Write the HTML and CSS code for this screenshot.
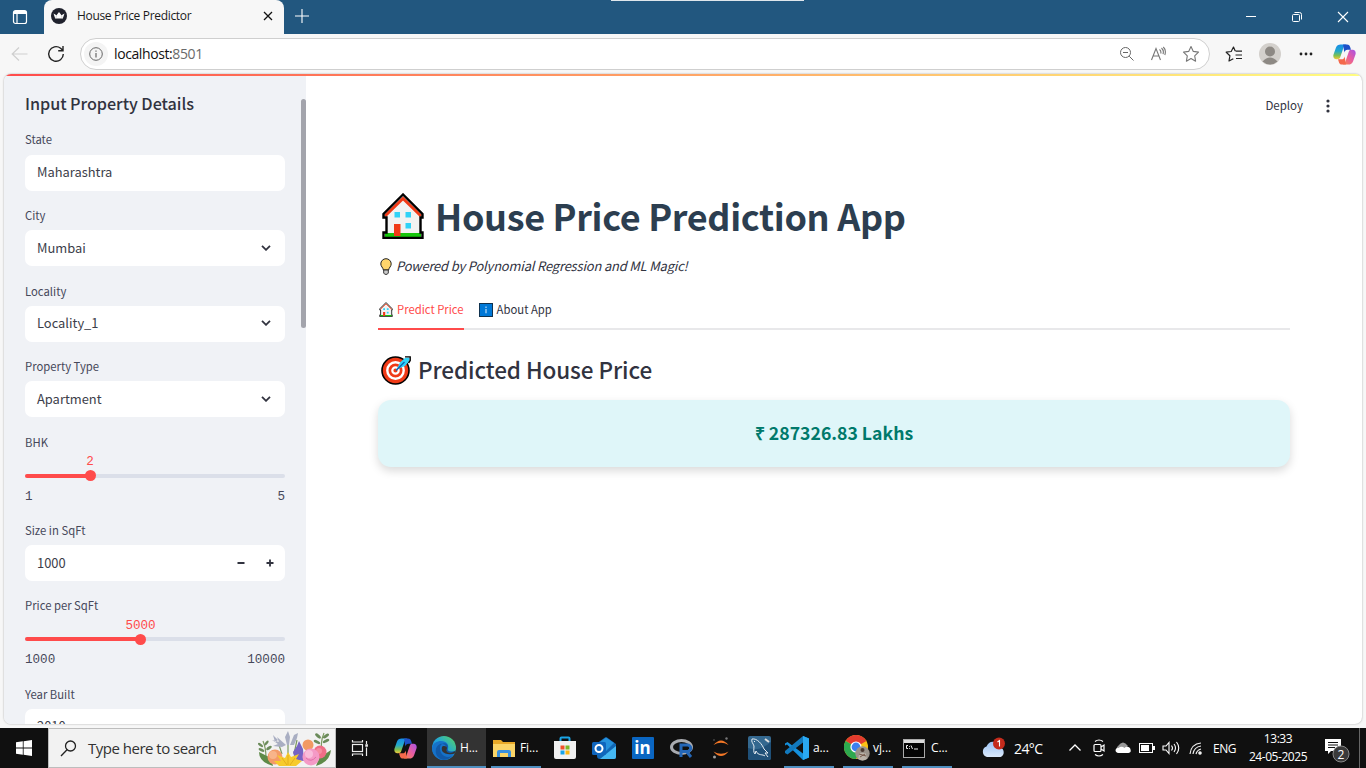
FILE: index.html
```html
<!DOCTYPE html>
<html lang="en">
<head>
<meta charset="utf-8">
<title>House Price Predictor</title>
<link rel="stylesheet" href="styles.css">
</head>
<body>
<svg class="defs" aria-hidden="true">
  <defs>
    <symbol id="house" viewBox="0 0 42 46">
      <path d="M21 3L2 22v4h3v18h-3v1h38v-26L21 3z" fill="#f2f2f2"/>
      <path d="M3 40h36v4H3z" fill="#16c60c"/>
      <path d="M12 31h6.500v12H12z" fill="#f03a17"/>
      <path d="M12.500 19h5.500v5.500h-5.500zM23.500 19H29v5.500h-5.500zM23.500 30H29v5.500h-5.500z" fill="#31d2f7"/>
      <path d="M3 23L21 5.500 39 23" fill="none" stroke="#f03a17" stroke-width="3"/>
      <path d="M21 1.500L1.500 21v3.500h3v15h-3V45h39v-5.500h-2v-15h2V21L21 1.500z" fill="none" stroke="#000" stroke-width="2.400"/>
    </symbol>
    <symbol id="copilot" viewBox="0 0 24 22">
      <path d="M8 .5h6c-2.500 1-3 3-3.800 5.500L7.500 14c-.6 1.700-1.500 2-3 2H3.500C.8 16-.2 13.500.5 11L3 4C3.900 1.500 5.500.5 8 .5z" fill="url(#cpa)"/>
      <path d="M10.500.5h4c2.300 0 3 1.200 3.500 3l.8 2.500h-3.600c-2 0-2.800 1-3.400 3z" fill="#1d50c8"/>
      <path d="M16 21.500h-6c2.500-1 3-3 3.800-5.500L16.500 8c.6-1.700 1.500-2 3-2h1c2.700 0 3.700 2.500 3 5L21 18c-.9 2.500-2.500 3.500-5 3.500z" fill="url(#cpb)"/>
      <path d="M13.500 21.500h-4c-2.300 0-3-1.200-3.500-3L5.200 16h3.600c2 0 2.800-1 3.400-3z" fill="#f4694c"/>
    </symbol>
    <linearGradient id="cpa" x1="0" y1="0" x2="0" y2="1"><stop offset="0" stop-color="#178be8"/><stop offset=".45" stop-color="#23aacb"/><stop offset=".75" stop-color="#7fc04f"/><stop offset="1" stop-color="#f5c73c"/></linearGradient>
    <linearGradient id="cpb" x1="1" y1="0" x2="0" y2="1"><stop offset="0" stop-color="#a653e8"/><stop offset=".5" stop-color="#e85d9f"/><stop offset="1" stop-color="#fb8a45"/></linearGradient>
    <linearGradient id="edgeg" x1="0" y1="1" x2="1" y2="0"><stop offset="0" stop-color="#1470c8"/><stop offset=".5" stop-color="#1fa3dc"/><stop offset="1" stop-color="#5bd95a"/></linearGradient>
    <linearGradient id="cloudg" x1="0" y1="0" x2="0" y2="1"><stop offset="0" stop-color="#9cc3f4"/><stop offset="1" stop-color="#dbe9fb"/></linearGradient>
  </defs>
</svg>

<header class="titlebar">
  <div class="workspaces"><svg width="16" height="16" viewBox="0 0 16 16" fill="none" stroke="#fff" stroke-width="1.200"><rect x="1.500" y="1.500" width="13" height="13" rx="2"/><path d="M5 5v9.500M2 4.500h12.500" /><path d="M2 3h12" stroke-width="2"/></svg></div>
  <div class="tab">
    <svg width="16" height="16" viewBox="0 0 16 16"><circle cx="8" cy="8" r="8" fill="#20222d"/><path d="M2.500 5.500l3 1.700L8 4l2.500 3.200 3-1.700-1.700 5H4.200z" fill="#fff"/><path d="M5.500 7.200L4.800 10.500M10.500 7.200l.7 3.300" stroke="#aaa" stroke-width=".5"/></svg>
    <span class="tab-title">House Price Predictor</span>
    <svg class="tab-close" width="10" height="10" viewBox="0 0 10 10"><path d="M1 1l8 8M9 1L1 9" stroke="#111" stroke-width="1.300"/></svg>
  </div>
  <svg class="newtab" width="14" height="14" viewBox="0 0 14 14"><path d="M7 0v14M0 7h14" stroke="#fff" stroke-width="1.100"/></svg>
  <div class="drag-hint"></div>
  <div class="wincontrols">
    <svg width="46" height="34"><path d="M18 16.500h10" stroke="#fff"/></svg>
    <svg width="46" height="34" fill="none" stroke="#fff"><rect x="18.500" y="14.500" width="7" height="7" rx="1"/><path d="M20.500 12.500h5a2 2 0 0 1 2 2v5"/></svg>
    <svg width="46" height="34"><path d="M18 12l10 10M28 12L18 22" stroke="#fff" stroke-width="1.100"/></svg>
  </div>
</header>

<div class="toolbar">
  <svg class="back" width="18" height="16" viewBox="0 0 18 16" fill="none" stroke="#cfcfcf" stroke-width="1.200"><path d="M8 1.500L1.200 8 8 14.500M1.200 8H16.500"/></svg>
  <svg class="reload" width="18" height="18" viewBox="0 0 18 18" fill="none" stroke="#222" stroke-width="1.400"><path d="M16.300 9a7.300 7.300 0 1 1-2.700-5.700L16 5.500M16 1v4.800h-4.800"/></svg>
  <div class="address">
    <span class="info"><svg width="14" height="14" viewBox="0 0 14 14" fill="none" stroke="#666"><circle cx="7" cy="7" r="6.300"/><path d="M7 6v4.500M7 3.500v1.300" stroke-width="1.200"/></svg></span>
    <span class="url">localhost:<span class="port">8501</span></span>
    <div class="address-icons">
      <svg width="16" height="16" viewBox="0 0 16 16" fill="none" stroke="#666"><circle cx="6.500" cy="6.500" r="5"/><path d="M10.200 10.200l4.300 4.300M4 6.500h5"/></svg>
      <svg width="17" height="16" viewBox="0 0 17 16" fill="none" stroke="#777"><path d="M1.500 14L6 2.500 10.500 14M3 10h6M9.500 3.500q2 1.500 1.200 4M11.500 2q2.700 2.500 1.500 6.200M13.300 1q3.200 3 1.500 8" stroke-width="1.100"/></svg>
      <svg width="18" height="18" viewBox="0 0 18 18" fill="none" stroke="#777" stroke-width="1.100"><path d="M9 1.500l2.300 4.900 5.200.7-3.800 3.700.9 5.400L9 13.600l-4.600 2.600.9-5.400L1.500 7.100l5.200-.7z" stroke-linejoin="round"/></svg>
    </div>
  </div>
  <svg class="favs" width="18" height="18" viewBox="0 0 18 18" fill="none" stroke="#222" stroke-width="1.200"><path d="M10.200 6L8.500 2 6.200 6.500l-5 .7 3.700 3.600-.9 5.200 4.300-2.300M10.500 6.200H17M10.500 10H17M11 13.500h6" stroke-linejoin="round"/></svg>
  <svg class="profile" width="22" height="22" viewBox="0 0 22 22"><circle cx="11" cy="11" r="11" fill="#d3d0cc"/><circle cx="11" cy="8.500" r="5" fill="#8d8984"/><path d="M3.500 18.500q7.500-8 15 0A11 11 0 0 1 3.500 18.500z" fill="#8d8984"/></svg>
  <svg class="more" width="14" height="4" viewBox="0 0 14 4" fill="#222"><circle cx="2" cy="2" r="1.400"/><circle cx="7" cy="2" r="1.400"/><circle cx="12" cy="2" r="1.400"/></svg>
  <svg class="cp" width="23" height="21"><use href="#copilot"/></svg>
</div>

<div class="viewport">
  <div class="decoration"></div>
  <div class="app">
    <aside class="sidebar">
      <h3>Input Property Details</h3>
      <div class="field"><label>State</label><div class="input">Maharashtra</div></div>
      <div class="field"><label>City</label><div class="input">Mumbai<svg class="chev" width="10" height="6" viewBox="0 0 10 6"><path d="M1 .8l4 4 4-4" fill="none" stroke="#31333f" stroke-width="1.800"/></svg></div></div>
      <div class="field"><label>Locality</label><div class="input">Locality_1<svg class="chev" width="10" height="6" viewBox="0 0 10 6"><path d="M1 .8l4 4 4-4" fill="none" stroke="#31333f" stroke-width="1.800"/></svg></div></div>
      <div class="field"><label>Property Type</label><div class="input">Apartment<svg class="chev" width="10" height="6" viewBox="0 0 10 6"><path d="M1 .8l4 4 4-4" fill="none" stroke="#31333f" stroke-width="1.800"/></svg></div></div>
      <div class="field slider"><label>BHK</label>
        <div class="track" style="--p:25%"><div class="fill"></div><div class="thumb"><span>2</span></div></div>
        <div class="ticks"><span>1</span><span>5</span></div>
      </div>
      <div class="field"><label>Size in SqFt</label><div class="input">1000<span class="steps"><svg width="8" height="8" viewBox="0 0 8 8"><path d="M.5 4h7" stroke="#31333f" stroke-width="1.800"/></svg><svg width="8" height="8" viewBox="0 0 8 8"><path d="M.5 4h7M4 .5v7" stroke="#31333f" stroke-width="1.800"/></svg></span></div></div>
      <div class="field slider"><label>Price per SqFt</label>
        <div class="track" style="--p:44.44%"><div class="fill"></div><div class="thumb"><span>5000</span></div></div>
        <div class="ticks"><span>1000</span><span>10000</span></div>
      </div>
      <div class="field"><label>Year Built</label><div class="input">2010</div></div>
      <div class="scrollbar"></div>
    </aside>

    <main class="main">
      <div class="appbar"><span>Deploy</span><svg width="4" height="14" viewBox="0 0 4 14" fill="#31333f"><circle cx="2" cy="2" r="1.600"/><circle cx="2" cy="7" r="1.600"/><circle cx="2" cy="12" r="1.600"/></svg></div>
      <div class="content">
        <h1><svg width="42" height="46"><use href="#house"/></svg><span>House Price Prediction App</span></h1>
        <p class="tagline"><svg width="12" height="17" viewBox="0 0 12 17"><path d="M6 .7a5.200 5.200 0 0 0-5.200 5.200C.8 8.500 3 9.500 3.400 12h5.200c.4-2.500 2.600-3.500 2.600-6.100A5.200 5.200 0 0 0 6 .7z" fill="#ffd56b" stroke="#222"/><path d="M3.700 12h4.600v3L7.200 16.300H4.800L3.700 15z" fill="#ccc" stroke="#222" stroke-width=".9"/></svg><span>Powered by Polynomial Regression and ML Magic!</span></p>
        <div class="tabs">
          <div class="tabitem active"><svg width="14" height="15" viewBox="0 0 42 46"><use href="#house"/></svg><span>Predict Price</span></div>
          <div class="tabitem"><svg width="14" height="14" viewBox="0 0 14 14"><rect x=".5" y=".5" width="13" height="13" fill="#0078d7" stroke="#10324f"/><path d="M7 6v4.300M7 3.600v1.300" stroke="#cfe7fa" stroke-width="1.100" fill="none"/></svg><span>About App</span></div>
        </div>
        <h2><svg width="30" height="29" viewBox="0 0 30 29"><circle cx="14.500" cy="14.500" r="13.500" fill="#f03a17" stroke="#000" stroke-width="1.600"/><circle cx="14.500" cy="14.500" r="8.200" fill="none" stroke="#fff" stroke-width="2.400"/><circle cx="14.500" cy="14.500" r="3.200" fill="none" stroke="#fff" stroke-width="2.200"/><path d="M15 14.500l4-8L24 2l4.500-.5v3L24 10l-5 2z" fill="#31d2f7"/><path d="M24 .9h5.200v3.600L27.500 7" fill="none" stroke="#000" stroke-width="1.400"/><path d="M15 14.500l8.500-8.500" fill="none" stroke="#0a68b8" stroke-width="1.500"/></svg><span>Predicted House Price</span></h2>
        <div class="result"><span>₹ 287326.83 Lakhs</span></div>
      </div>
    </main>
  </div>
</div>

<footer class="taskbar">
  <div class="tb w48"><svg width="16" height="16" viewBox="0 0 16 16" fill="#fff"><path d="M0 2.300L6.800 1.300v6.300H0zM7.600 1.200L16 0v7.600H7.600zM0 8.400h6.800v6.300L0 13.700zM7.600 8.400H16V16l-8.400-1.200z"/></svg></div>
  <div class="search">
    <svg width="17" height="17" viewBox="0 0 17 17" fill="none" stroke="#222" stroke-width="1.300"><circle cx="10.500" cy="6" r="5"/><path d="M7 9.700L1 16"/></svg>
    <span>Type here to search</span>
    <svg class="flowers" width="74" height="37" viewBox="0 0 74 37">
      <path d="M8 28Q8 18 5 11M64 24Q62 12 66 3M30 30V12M24 24l-4-12M36 24l3-14" stroke="#7c9a60" stroke-width="1.200" fill="none"/>
      <g fill="#6b8b5a"><ellipse cx="2.500" cy="15" rx="3" ry="1.300" transform="rotate(35 2.500 15)"/><ellipse cx="8.500" cy="13" rx="3" ry="1.300" transform="rotate(-50 8.500 13)"/><ellipse cx="3.500" cy="20" rx="3.200" ry="1.400" transform="rotate(25 3.500 20)"/><ellipse cx="11" cy="18" rx="3.200" ry="1.400" transform="rotate(-35 11 18)"/><ellipse cx="60" cy="6" rx="3.500" ry="1.500" transform="rotate(40 60 6)"/><ellipse cx="68" cy="6" rx="3.500" ry="1.500" transform="rotate(-35 68 6)"/><ellipse cx="59" cy="12" rx="3.500" ry="1.500" transform="rotate(25 59 12)"/><ellipse cx="68" cy="11" rx="3.500" ry="1.500" transform="rotate(-25 68 11)"/></g>
      <path d="M1 22q0 10 14 14l-2-8zM73 20q-1 12-15 16l3-8z" fill="#5e8a48"/>
      <path d="M29 15l-2-8 3-6 2 6-1 8zM28 15l-9-8 2 5-7-2 6 4-5 2 9 1zM32 15l4-10 4-2-1 5-3 7zM17 12l-2-7 5 5z" fill="#a9aec2"/>
      <circle cx="17" cy="27" r="7.500" fill="#f39a68"/><circle cx="15" cy="25" r="4" fill="#f8b48a"/><circle cx="50" cy="15" r="5.500" fill="#f29a63"/><circle cx="62" cy="22" r="6.500" fill="#ef6d86"/><circle cx="61" cy="21" r="3" fill="#f58ca0"/>
      <path d="M37 30l-2-8 4-6 2-5 4 8 1 12z" fill="#7663c4"/>
      <circle cx="53" cy="27" r="8.500" fill="#f49ac6"/><circle cx="51" cy="24" r="4" fill="#f9bddb"/><path d="M48 28q5 5 10-1" stroke="#e070a8" fill="none"/>
      <path d="M30 22l3 5 8-3-3 5 6 2-6 5H21l-5-5 7 0-4-6 8 3z" fill="#f7cb2d"/><path d="M30 25v10M24 28l5 7M37 28l-5 7" stroke="#e4ad1c"/>
    </svg>
  </div>
  <div class="tb w48"><svg width="18" height="16" viewBox="0 0 18 16" fill="none" stroke="#eee" stroke-width="1.200"><rect x="1.500" y="4.500" width="10" height="7"/><path d="M1.500 0v2h10V0M1.500 16v-2h10v2M15.500 1v3M15.500 7.500V16"/><path d="M14.300 5.500h2.600" stroke-width="2.500"/></svg></div>
  <div class="tb w43"><svg width="23" height="21"><use href="#copilot"/></svg></div>
  <div class="tb run edge"><svg width="24" height="24" viewBox="0 0 24 24"><circle cx="12" cy="12" r="12" fill="url(#edgeg)"/><path d="M0 12C1 7 5 5 9 5c6 0 8 4 7 8-.5 2 2 3 4 3 1.500 0 2.500-.5 3.500-1.500-1 5-6 9.500-12 9.500C5 24 0 18 0 12z" fill="#1672c9"/><path d="M8 12c0 7 6 11 12 8-3 4-9 5-13 2-5-4-4-12 1-14 5-1 7 3 6 5-1 2 1 5 5 4 2 0 4-1 4.500-2.500-1.500 1-7 2-8-.5-.5-2 1-3 0-5-1.500-3-7.500-2-7.500 3z" fill="#1159a8"/><path d="M10 11c1-2 5-1 5 1 0 1-1 2-.5 3 1 2.500 6 2.800 9.300-.8l-.8 3.200C18 19 12 18 10.500 15.500 9.800 14 9.500 12.500 10 11z" fill="#333"/></svg><span>H...</span></div>
  <div class="tb run files"><svg width="22" height="19" viewBox="0 0 22 19"><path d="M0 1h8l2 2h12v15H0z" fill="#e8a928"/><path d="M0 5h22v13H0z" fill="#fbd567"/><path d="M4 18v-5q0-2 2-2h10q2 0 2 2v5h-3v-4H7v4z" fill="#3b90dc"/></svg><span>Fi...</span></div>
  <div class="tb w39 first"><svg width="24" height="24" viewBox="0 0 24 24"><path d="M7.500 6V2.500q0-1 1-1h7q1 0 1 1V6" fill="none" stroke="#1aa5e6" stroke-width="2"/><path d="M1 5h22v16q0 2-2 2H3q-2 0-2-2z" fill="#f1f1f1"/><path d="M7.500 9.500h4v4h-4z" fill="#f0512a"/><path d="M12.500 9.500h4v4h-4z" fill="#7eb927"/><path d="M7.500 14.500h4v4h-4z" fill="#18a3e8"/><path d="M12.500 14.500h4v4h-4z" fill="#fbb613"/></svg></div>
  <div class="tb w39"><svg width="24" height="24" viewBox="0 0 24 24"><path d="M4 8L13 1.500q1-.7 2 0L24 8v13q0 2-2 2H8q-3 0-3-3z" fill="#1066b5"/><path d="M8 6l6-4.500L22 7l-8 8z" fill="#2591dc"/><path d="M24 10v11q0 2-2 2H8z" fill="#45b8f3"/><rect y="6" width="14" height="13" rx="1.500" fill="#0f65bd"/><circle cx="7" cy="12.500" r="3.500" fill="none" stroke="#fff" stroke-width="2"/></svg></div>
  <div class="tb w39"><span class="linkedin">in</span></div>
  <div class="tb w39"><svg width="24" height="19" viewBox="0 0 24 19"><ellipse cx="11.500" cy="8" rx="10" ry="6.500" fill="none" stroke="#a9abb0" stroke-width="3"/><path d="M11 18V6h6.500a3 3 0 0 1 0 6.500H11M16.500 12.500L21 18" stroke="#2467b8" stroke-width="3" fill="none"/></svg></div>
  <div class="tb w39"><svg width="18" height="22" viewBox="0 0 18 22"><path d="M1.500 8Q9-1 16.500 8 9 3.500 1.500 8zM1.500 14.500q7.500 9 15 0-7.500 4.500-15 0z" fill="#f37726"/><circle cx="14.500" cy="1.500" r="1.200" fill="#767677"/><circle cx="2.500" cy="20" r="1.500" fill="#9e9e9e"/><circle cx="2" cy="3" r=".7" fill="#777"/></svg></div>
  <div class="tb w39"><svg width="23" height="24" viewBox="0 0 23 24"><rect width="23" height="24" rx="2" fill="#34688f"/><path d="M0 12Q12 16 23 6v16q0 2-2 2H2q-2 0-2-2z" fill="#1f5078"/><path d="M4 3c5-1 10 5 12 10l4 4-3 0 3 4M4 3c-1 3 1 4 2 7 0 3-1 6 1 8l1-3c2 5 7 3 9 5M6 5l1 1" fill="none" stroke="#e6edf3"/><path d="M17 3l4 3" stroke="#ddd" stroke-width="2"/></svg></div>
  <div class="tb run code"><svg width="24" height="24" viewBox="0 0 24 24"><path d="M18 0l6 2.500v19L18 24 2 8.500 0 9.500v-2L2.500 6 18 17.500z" fill="#1590dc"/><path d="M18 0L0 15v2l2.500 1.500L18 6.500z" fill="#1279bd"/><path d="M18 0l6 2.500v19L18 24z" fill="#2aa9f3"/></svg><span>a...</span></div>
  <div class="tb run chrome"><svg width="26" height="26" viewBox="0 0 26 26"><circle cx="12" cy="12" r="12" fill="#fbc116"/><path d="M12 12L1.600 6A12 12 0 0 1 22.400 6z" fill="#e33b2e"/><path d="M1.600 6A12 12 0 0 0 12 24l5-9-5-3z" fill="#2da94f"/><circle cx="12" cy="12" r="5.600" fill="#fff"/><circle cx="12" cy="12" r="4.400" fill="#3c80ee"/><circle cx="18.500" cy="18.500" r="7.200" fill="#9a938a"/><circle cx="18.500" cy="15" r="2" fill="#4b3a32"/><path d="M14 24l1.500-6h6l1.500 6q-4.500 2.500-9 0z" fill="#b9b2a8"/><path d="M15 19l7 2M16 22l5-3" stroke="#765b4c"/></svg><span>vj...</span></div>
  <div class="tb run cmd"><svg width="22" height="19" viewBox="0 0 22 19"><rect x=".5" y=".5" width="21" height="18" fill="#050505" stroke="#aaa"/><path d="M1 1h20v3H1z" fill="#ddd"/><path d="M5 6.500H3.500v3H5M6.500 7v.8M6.500 9v.8M8 6.500l1.500 3.500M11 10h4" stroke="#eee" fill="none"/></svg><span>C...</span></div>
  <div class="tray">
    <div class="weather"><svg width="25" height="22" viewBox="0 0 25 22"><path d="M6 20a5.500 5.500 0 0 1-.5-10.500Q8 3.500 14 5q4 1 5 5.500A5 5 0 0 1 19.500 20z" fill="url(#cloudg)"/><circle cx="18" cy="6.500" r="6" fill="#c42b1c"/><path d="M16.500 5l2-1.500v6" fill="none" stroke="#fff" stroke-width="1.100"/></svg><span>24°C</span></div>
    <svg width="24" height="24" viewBox="0 0 24 24" fill="none" stroke="#fff" stroke-width="1.300"><path d="M6.500 14.500L12 9l5.500 5.500"/></svg>
    <svg width="24" height="24" viewBox="0 0 24 24" fill="none" stroke="#fff" stroke-width="1.200"><rect x="7" y="8.500" width="7" height="7" rx="1"/><path d="M14 11l3-2v6l-3-2M8 5.500q4-3 8 0M8 18.500q4 3 8 0"/></svg>
    <svg width="24" height="24" viewBox="0 0 24 24"><path d="M7 16a4 4 0 0 1 0-6q5-7 10 0l-7 6z" fill="#999"/><path d="M7.500 17q-3-.5-3-3 .5-2.500 3-2 3-2.500 6 0 1.500-2 4-1 2 .5 2 2.500 1 3-2 3.500z" fill="#fff"/></svg>
    <svg width="24" height="24" viewBox="0 0 24 24"><rect x="4.500" y="7.500" width="13" height="9" fill="none" stroke="#fff"/><path d="M6 9h8v6H6zM18 10h2v4h-2z" fill="#fff"/></svg>
    <svg width="24" height="24" viewBox="0 0 24 24" fill="none" stroke="#fff" stroke-width="1.100"><path d="M4 10h3l3-3.500v11L7 14H4zM12.500 9.500q2 2.500 0 5M15 8q3 4 0 8M17.500 6q4.500 6 0 12"/></svg>
    <svg width="26" height="24" viewBox="0 0 26 24" fill="none" stroke="#eee" stroke-width="1.200"><path d="M7 18Q8 8 18 7M10 18q1-7 8-8M13 18q1-4 5-5"/><circle cx="17" cy="17" r="1.200" fill="#fff"/></svg>
    <span class="lang">ENG</span>
    <div class="clock"><span>13:33</span><span>24-05-2025</span></div>
    <svg class="notif" width="26" height="26" viewBox="0 0 26 26"><path d="M1 2h16v12H7l-3 3v-3H1z" fill="#fff"/><path d="M4 5.500h10M4 8h10M4 10.500h7" stroke="#111"/><circle cx="17" cy="17" r="8" fill="#3a3a3a" stroke="#888"/><text x="17" y="21.500" text-anchor="middle" fill="#fff" font-size="12">2</text></svg>
    <div class="peek"></div>
  </div>
</footer>
</body>
</html>
```
FILE: styles.css
```css
* { box-sizing: border-box; }
body {
  margin: 0; width: 1366px; height: 768px; overflow: hidden;
  display: flex; flex-direction: column;
  background: #f7f7f7;
  font-family: "Open Sans", "Noto Sans", sans-serif;
}
svg { display: block; flex: none; }
.defs { position: absolute; width: 0; height: 0; }
h1, h2, h3, p { margin: 0; }

/* Browser chrome */
.titlebar { height: 34px; background: #22577f; display: flex; align-items: center; flex: none; }
.workspaces { width: 44px; padding-left: 12px; align-self: stretch; display: flex; align-items: center; background: #22577f; }
.tab { width: 240px; height: 34px; background: #f7f7f7; border-radius: 8px 8px 0 0; display: flex; align-items: center; padding: 0 11px 2px 7px; gap: 10px; margin-right: 11px; }
.tab-title { font-size: 12px; letter-spacing: -.33px; color: #1b1b1b; white-space: nowrap; flex: 1; line-height: 16px; padding-bottom: 1px; }
.newtab { margin-bottom: 3px; }
.drag-hint { width: 193px; height: 1px; background: #dfe6ec; margin: 0 0 0 302px; align-self: flex-start; }
.wincontrols { display: flex; margin-left: auto; }
.toolbar { height: 40px; flex: none; display: flex; align-items: center; padding: 0 11px 0 11px; }
.reload { margin-left: 18px; }
.address { width: 1130px; height: 32px; margin-left: 15px; background: #fff; border: 1px solid #cfcfcf; border-radius: 16px; display: flex; align-items: center; padding: 0 9px 0 3px; }
.info { width: 24px; height: 24px; border-radius: 50%; background: #f4f4f4; display: grid; place-items: center; }
.url { font-size: 14px; letter-spacing: -.4px; color: #111; margin-left: 6px; padding-bottom: 2px; }
.port { color: #6a6a6a; }
.address-icons { display: flex; align-items: center; gap: 15px; margin-left: auto; }
.favs { margin-left: 15px; }
.profile { margin-left: 16px; }
.more { margin-left: 18px; }
.cp { margin-left: 20px; margin-right: -2px; }

/* Page */
.viewport { height: 650px; margin: 0 4px 4px; flex: none; display: flex; flex-direction: column; border-radius: 7px; overflow: hidden; background: #fff; box-shadow: 0 0 2px rgba(0, 0, 0, .35); }
.decoration { height: 2px; flex: none; background: linear-gradient(90deg, #ff4b4b, #fffd80); }
.app { flex: 1; min-height: 0; display: flex; font-family: "Noto Sans CJK SC", sans-serif; color: #31333f; }
.sidebar { width: 302px; background: #f0f2f6; padding: 14px 21px 0; position: relative; overflow: hidden; flex: none; }
.sidebar h3 { font-size: 16.200px; letter-spacing: -.05px; line-height: 26px; font-weight: 500; height: 39.400px; white-space: nowrap; }
.field { height: 61.200px; margin-bottom: 14.400px; }
.field label { display: block; font-size: 11.300px; line-height: 20px; height: 25.200px; color: #46485a; }
.input { height: 36px; background: #fff; border-radius: 7px; padding: 0 14px 2px 12px; display: flex; align-items: center; font-size: 12.900px; color: #3c3e4a; }
.chev { margin-left: auto; margin-top: 1px; }
.steps { display: flex; gap: 21px; margin-left: auto; margin-right: -2.500px; margin-top: 2px; }
.slider { height: 73.800px; }
.slider label { height: 42px; }
.track { height: 4px; border-radius: 2px; background: #dbdfe9; position: relative; }
.fill { width: var(--p); height: 4px; border-radius: 2px; background: #ff4b4b; }
.thumb { position: absolute; left: var(--p); top: -3.500px; width: 11px; height: 11px; margin-left: -5.500px; border-radius: 50%; background: #ff4b4b; }
.thumb span { position: absolute; left: 50%; bottom: 11px; transform: translateX(-50%); color: #ff4b4b; }
.thumb span, .ticks { font-family: "Liberation Mono", monospace; font-size: 12.600px; line-height: 16px; }
.ticks { display: flex; justify-content: space-between; margin-top: 11px; color: #46485a; }
.scrollbar { position: absolute; right: 0; top: 23px; width: 5px; height: 229px; border-radius: 3px; background: #a3a4ac; }

.main { flex: 1; }
.appbar { height: 60px; padding: 0 32px 0 0; display: flex; align-items: center; justify-content: flex-end; gap: 23px; font-size: 11.500px; }
.appbar span { padding-bottom: 2px; }
.content { padding: 55px 72px 0; }
h1 { height: 50px; display: flex; align-items: center; gap: 11px; padding-left: 4px; font-size: 36px; letter-spacing: -.34px; color: #2c3e50; font-weight: 700; white-space: nowrap; }
h1 span { padding-bottom: 3px; }
.tagline { height: 22px; margin-top: 14px; display: flex; align-items: center; gap: 4px; padding-left: 2px; font-size: 12.900px; letter-spacing: -.15px; font-style: italic; }
.tagline span { padding-bottom: 2px; }
.tabs { height: 39px; margin-top: 14px; display: flex; gap: 14px; border-bottom: 2px solid #e8e8ea; font-size: 11.300px; }
.tabitem { height: 39px; display: flex; align-items: center; gap: 4px; padding-bottom: 2px; }
.tabitem span { padding-bottom: 1px; }
.tabitem svg { margin-left: 1px; }
.tabitem.active { color: #ff4b4b; border-bottom: 2px solid #ff4b4b; padding-bottom: 0; }
h2 { height: 42px; margin-top: 19px; display: flex; align-items: center; gap: 7px; padding-left: 3px; font-size: 22.500px; letter-spacing: -.09px; font-weight: 500; white-space: nowrap; }
h2 span { padding-bottom: 2px; }
.result { height: 67px; margin-top: 9px; padding-bottom: 2px; background: #dff6f9; border-radius: 13px; box-shadow: 0 4px 10px rgba(0, 0, 0, .15); display: grid; place-items: center; color: #00796b; font-size: 17.650px; font-weight: 700; }

/* Taskbar */
.taskbar { height: 40px; flex: none; background: #101010; color: #fff; display: flex; font-size: 12px; }
.tb { display: flex; align-items: center; justify-content: center; flex: none; }
.w48 { width: 48px; }
.w43 { width: 43px; }
.w39 { width: 39px; }
.first { margin-left: 4px; }
.search { width: 288px; background: #f2f2f2; border: 1px solid #bdbdbd; color: #333; display: flex; align-items: center; padding-left: 11px; font-size: 15px; letter-spacing: -.5px; white-space: nowrap; flex: none; }
.search span { margin-left: 11px; }
.flowers { margin-left: auto; margin-right: 3px; }
.run { justify-content: flex-start; gap: 4px; border-bottom: 2px solid #4f8fc0; padding-top: 2px; white-space: nowrap; letter-spacing: -.1px; }
.run span { padding-bottom: 1px; }
.edge { width: 59px; padding-left: 5px; background: #333; }
.files { width: 50px; margin-left: 5px; padding-left: 2px; gap: 5px; }
.code { width: 50px; margin-left: 5px; padding-left: 1px; }
.chrome { width: 50px; margin-left: 9px; padding-left: 1px; gap: 3px; }
.cmd { width: 50px; margin-left: 9px; padding-left: 1px; gap: 6px; }
.linkedin { width: 22px; height: 22px; border-radius: 1px; background: #0a66c2; font-size: 17px; line-height: 21px; font-weight: 700; text-align: center; }
.tray { flex: 1; display: flex; align-items: center; padding-left: 29px; }
.weather { width: 82px; display: flex; align-items: center; gap: 8px; font-size: 14px; letter-spacing: -.6px; }
.lang { width: 36px; padding-left: 4px; letter-spacing: -.5px; }
.clock { width: 66px; display: flex; flex-direction: column; align-items: center; line-height: 18px; letter-spacing: -.45px; }
.notif { margin-left: 13px; margin-top: 4px; }
.peek { width: 1px; height: 40px; background: #666; margin-left: 9px; }
```
